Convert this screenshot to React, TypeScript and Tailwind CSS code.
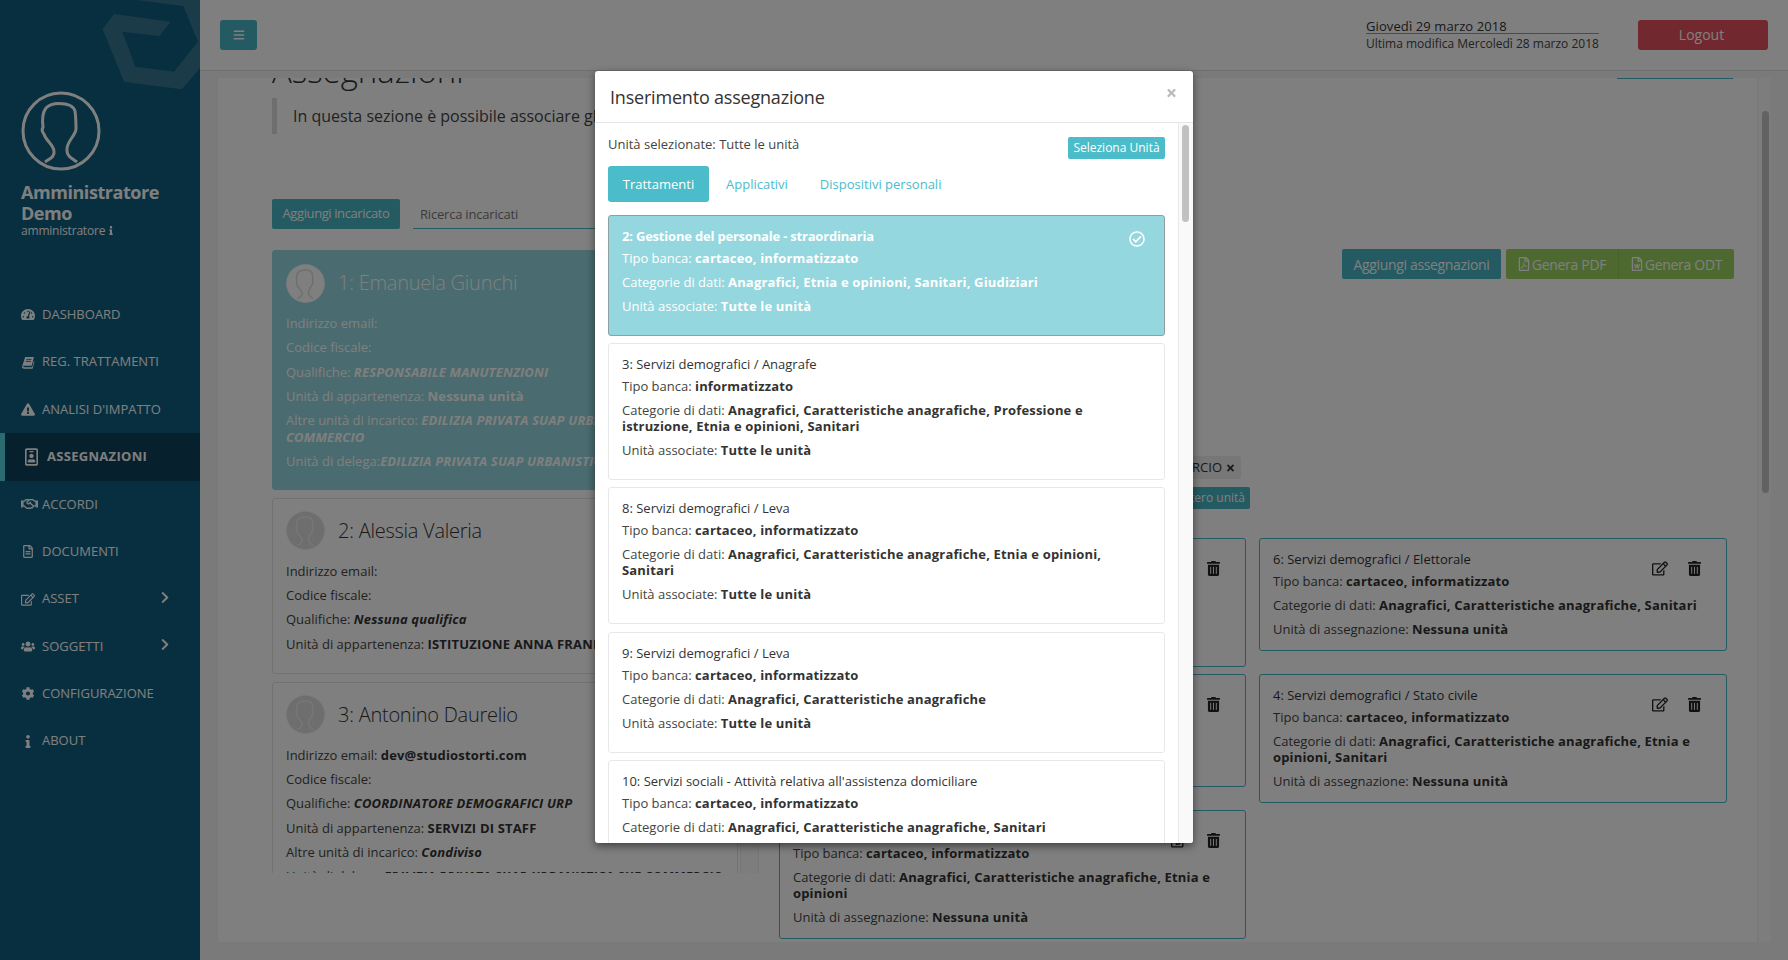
import React from "react";
import {
  FaBars, FaChevronRight, FaCog, FaExclamationTriangle, FaInfo, FaRegCheckCircle, FaRegEdit,
  FaRegFileAlt, FaRegFilePdf, FaRegFileWord, FaRegHandshake, FaRegIdBadge, FaTachometerAlt, FaTimes,
  FaTrashAlt, FaUsers,
} from "react-icons/fa";

const font = { fontFamily: '"Open Sans", "Noto Sans", sans-serif' };

function Person({ stroke, width = 3 }: { stroke: string; width?: number }) {
  return (
    <path
      fill="none"
      stroke={stroke}
      strokeWidth={width}
      d="M24 71 C30 67 34 65 33 60 C32 53 25 50 23 43 C21 41 21 38 22 36 C21 28 21 22 25 17 C29 13 34 12.5 38 12.5 C46 12.5 52 14 54 20 C55 27 55 33 55 38 C55 41 53 43 52 45 C49 50 45 54 46 60 C46 65 50 67 56 71"
    />
  );
}

function Logo() {
  return (
    <svg viewBox="0 0 360 300" className="absolute left-[90px] top-0 h-[100px] w-[120px]">
      <polygon fill="#ffffff" fillOpacity="0.16" points="38,87 72,42 242,65 208,108 97,95 136,200 252,215 324,125 280,18 140,0 360,0 360,170 275,268 102,245" />
    </svg>
  );
}

function SlantBook({ className }: { className?: string }) {
  return (
    <svg viewBox="0 0 14 14" className={className}>
      <path fill="currentColor" d="M4 1 H13.4 L11 10.6 H2.6 C2 10.6 1.8 11.2 2 11.6 C2.2 12 2.6 12.2 3 12.2 H11.6 L13.4 5 L14 5.6 L12.2 13.2 C12.1 13.6 11.8 13.8 11.4 13.8 H2.6 C1.4 13.8 0.4 12.8 0.6 11.4 Z" />
      <path fill="none" stroke="#0a3244" strokeWidth="0.8" d="M5.2 3.6 H10.8 M4.6 5.8 H10.2" />
    </svg>
  );
}

const nav: [string, React.ComponentType<{ className?: string }>, boolean?][] = [
  ["DASHBOARD", FaTachometerAlt],
  ["REG. TRATTAMENTI", SlantBook],
  ["ANALISI D'IMPATTO", FaExclamationTriangle],
  ["ASSEGNAZIONI", FaRegIdBadge],
  ["ACCORDI", FaRegHandshake],
  ["DOCUMENTI", FaRegFileAlt],
  ["ASSET", FaRegEdit, true],
  ["SOGGETTI", FaUsers, true],
  ["CONFIGURAZIONE", FaCog],
  ["ABOUT", FaInfo],
];

function Sidebar() {
  return (
    <aside className="relative h-full w-[200px] shrink-0 overflow-hidden bg-[#115e7e] text-white">
      <Logo />
      <svg viewBox="0 0 80 80" className="ml-[21px] mt-[91px] block h-[80px] w-[80px]">
        <circle cx="40" cy="40" r="38" fill="none" stroke="#ffffff" strokeWidth="3" />
        <Person stroke="#ffffff" />
      </svg>
      <div className="ml-[21px] mt-[11px] w-[150px] text-[18px] font-bold leading-[21px] tracking-[-0.45px]">Amministratore Demo</div>
      <div className="ml-[21px] flex h-[13px] items-center text-[12px] leading-[14px] tracking-[-0.2px]">
        amministratore <FaInfo className="ml-[3px] h-[9px] w-[6px]" />
      </div>
      <nav className="mt-[54px]">
        {nav.map(([label, Icon, arrow]) => {
          const active = label === "ASSEGNAZIONI";
          return (
            <div
              key={label}
              className={
                active
                  ? "flex h-[47.4px] items-center border-l-[5px] border-[#56d4e0] bg-[#0d405a] pl-[20px] text-[13px] font-bold tracking-[0.3px]"
                  : "flex h-[47.4px] items-center pl-[21px] text-[13px]"
              }
            >
              <span className={active ? "flex w-[22px] items-center" : "flex w-[21px] items-center"}>
                <Icon
                  className={
                    active
                      ? "h-[18px] w-[13px]"
                      : label === "ACCORDI"
                        ? "h-[14px] w-[17px]"
                        : "h-[13px] w-[14px]"
                  }
                />
              </span>
              <span>{label}</span>
              {arrow && <FaChevronRight className="absolute left-[160px] mb-[3px] h-[13px] w-[10px]" />}
            </div>
          );
        })}
      </nav>
    </aside>
  );
}

function Header() {
  return (
    <header className="flex h-[71px] shrink-0 items-center justify-between border-b border-[#dddddd] bg-white pl-[20px] pr-[20px] pb-[1px]">
      <button className="flex h-[30px] w-[37px] items-center justify-center rounded-[3px] bg-[#48b4c2] text-white">
        <FaBars className="h-[12px] w-[12px]" />
      </button>
      <div className="flex items-center">
        <div className="w-[233px] text-[#444444]">
          <div className="h-[17px] border-b border-[#48b4c2] text-[13px] font-medium leading-[18px] tracking-[0.1px] text-[#333333]">Giovedì 29 marzo 2018</div>
          <div className="mt-[1px] whitespace-nowrap text-[12px] leading-[18px]">Ultima modifica Mercoledì 28 marzo 2018</div>
        </div>
        <button className="ml-[39px] h-[30px] w-[130px] rounded-[3px] bg-[#e4505f] pr-[3px] text-[14px] text-white">Logout</button>
      </div>
    </header>
  );
}

type L = { l: string; b?: string; i?: boolean };

function Line({ l, b, i, last }: L & { last?: boolean }) {
  return (
    <p className={last ? "text-[13px] leading-[16px]" : "mb-[8px] text-[13px] leading-[16px]"}>
      {l}
      {b && <b className={i ? "font-bold italic tracking-[0.17px] text-[#333333]" : "font-bold tracking-[0.17px] text-[#333333]"}>{b}</b>}
    </p>
  );
}

function PersonCard({ name, lines, selected }: { name: string; lines: L[]; selected?: boolean }) {
  return (
    <div
      className={
        selected
          ? "rounded-[3px] border border-[#94d7de] bg-[#94d7de] px-[13px] pb-[12px] pt-[12px] text-white [&_b]:text-white [&_p]:leading-[16.33px]"
          : "rounded-[3px] border border-[#e4e4e4] bg-white px-[13px] pb-[13px] pt-[12px] text-[#444444] [&_p]:leading-[16.33px]"
      }
    >
      <div className="mb-[12px] flex h-[40px] items-center">
        <svg viewBox="0 0 80 80" className="mr-[13px] h-[39px] w-[39px] shrink-0">
          <circle cx="40" cy="40" r="39" fill={selected ? "#ffffff" : "#dcdcdc"} stroke={selected ? "#ffffff" : "#eeeeee"} />
          <Person stroke={selected ? "#dddddd" : "#eeeeee"} width={3} />
        </svg>
        <span className={selected ? "text-[20px] font-light tracking-[-0.25px]" : "text-[20px] font-light tracking-[-0.25px] text-[#333333]"}>{name}</span>
      </div>
      {lines.map((x, idx) => (
        <Line key={idx} {...x} />
      ))}
    </div>
  );
}

const people = [
  {
    name: "1: Emanuela Giunchi",
    selected: true,
    lines: [
      { l: "Indirizzo email: " },
      { l: "Codice fiscale: " },
      { l: "Qualifiche: ", b: "RESPONSABILE MANUTENZIONI", i: true },
      { l: "Unità di appartenenza: ", b: "Nessuna unità" },
      { l: "Altre unità di incarico: ", b: "EDILIZIA PRIVATA SUAP URBANISTICA SUE COMMERCIO", i: true },
      { l: "Unità di delega:", b: "EDILIZIA PRIVATA SUAP URBANISTICA SUE COMMERCIO", i: true },
    ],
  },
  {
    name: "2: Alessia Valeria",
    lines: [
      { l: "Indirizzo email: " },
      { l: "Codice fiscale: " },
      { l: "Qualifiche: ", b: "Nessuna qualifica", i: true },
      { l: "Unità di appartenenza: ", b: "ISTITUZIONE ANNA FRANK" },
    ],
  },
  {
    name: "3: Antonino Daurelio",
    lines: [
      { l: "Indirizzo email: ", b: "dev@studiostorti.com" },
      { l: "Codice fiscale: " },
      { l: "Qualifiche: ", b: "COORDINATORE DEMOGRAFICI URP", i: true },
      { l: "Unità di appartenenza: ", b: "SERVIZI DI STAFF" },
      { l: "Altre unità di incarico: ", b: "Condiviso", i: true },
      { l: "Unità di delega: ", b: "EDILIZIA PRIVATA SUAP URBANISTICA SUE COMMERCIO", i: true },
    ],
  },
];

const assigned = [
  { t: "5: Servizi demografici / Contratti", banca: "cartaceo, informatizzato", cat: "Anagrafici, Caratteristiche anagrafiche, Finanziari, Sanitari" },
  { t: "6: Servizi demografici / Elettorale", banca: "cartaceo, informatizzato", cat: "Anagrafici, Caratteristiche anagrafiche, Sanitari" },
  { t: "7: Servizi demografici / Leva", banca: "cartaceo, informatizzato", cat: "Anagrafici, Sanitari" },
  { t: "4: Servizi demografici / Stato civile", banca: "cartaceo, informatizzato", cat: "Anagrafici, Caratteristiche anagrafiche, Etnia e opinioni, Sanitari" },
  { t: "1: Servizi demografici / Anagrafe", banca: "cartaceo, informatizzato", cat: "Anagrafici, Caratteristiche anagrafiche, Etnia e opinioni" },
];

function AssignedCard({ t, banca, cat }: { t: string; banca: string; cat: string }) {
  return (
    <div className="relative rounded-[3px] border border-[#48b4c2] bg-white px-[13px] pb-[13px] pt-[12px] text-[#444444]">
      <div className="absolute right-[25px] top-[22px] flex items-center gap-[20px] text-[#222222]">
        <FaRegEdit className="h-[15px] w-[16px]" />
        <FaTrashAlt className="h-[15px] w-[13px]" />
      </div>
      <p className="mb-[6px] text-[13px] font-medium leading-[16px] text-[#333333]">{t}</p>
      <Line l="Tipo banca: " b={banca} />
      <Line l="Categorie di dati: " b={cat} />
      <Line l="Unità di assegnazione: " b="Nessuna unità" last />
    </div>
  );
}

function Content() {
  return (
    <div className="ml-[18px] mr-[17px] mt-[7px] flex h-[864px] overflow-hidden bg-white">
      <div className="min-w-0 flex-1 overflow-hidden pl-[54px] pr-[24px]">
        <div className="-mt-[30px] flex h-[46px] justify-between">
          <h1 className="text-[33px] font-light leading-[46px] text-[#333333]">Assegnazioni</h1>
          <div className="mt-[30px] h-[1px] w-[116px] bg-[#48b4c2]" />
        </div>
        <blockquote className="mt-[4px] flex h-[36px] items-center whitespace-nowrap border-l-[5px] border-[#dddddd] pl-[16px] text-[16px] text-[#444444]">
          In questa sezione è possibile associare gli incaricati ai trattamenti
        </blockquote>
        <div className="mt-[65px] flex">
          <div className="w-[487px] shrink-0">
            <div className="flex h-[30px] gap-[13px]">
              <button className="w-[128px] rounded-[2px] bg-[#48b4c2] text-[13px] tracking-[-0.4px] text-white">Aggiungi incaricato</button>
              <input
                placeholder="Ricerca incaricati"
                className="min-w-0 flex-1 border-b border-[#48b4c2] bg-white px-[7px] pt-[2px] text-[13px] tracking-[-0.2px] outline-none placeholder:text-[#777777]"
              />
            </div>
            <div className="mt-[21px] flex h-[623px] overflow-hidden">
              <div className="flex w-[466px] shrink-0 flex-col gap-[7.5px]">
                {people.map((p) => (
                  <PersonCard key={p.name} {...p} />
                ))}
              </div>
              <div className="ml-[2px] w-[19px] border-x border-[#eeeeee] bg-[#fbfbfb]" />
            </div>
          </div>
          <div className="ml-[20px] min-w-0 flex-1">
            <div className="mt-[50px] flex justify-end">
              <button className="h-[30px] w-[159px] rounded-[2px] bg-[#48b4c2] text-[14px] tracking-[-0.35px] text-white">Aggiungi assegnazioni</button>
              <div className="-mr-[1px] ml-[5px] flex h-[30px] items-center rounded-[2px] bg-[#9ad35f] text-[14px] tracking-[-0.3px] text-white">
                <span className="flex h-full w-[113px] items-center justify-center gap-[2px] border-r border-[#8cc254]">
                  <FaRegFilePdf className="h-[14px] w-[12px]" /> Genera PDF
                </span>
                <span className="flex h-full w-[115px] items-center justify-center gap-[2px]">
                  <FaRegFileWord className="h-[14px] w-[12px]" /> Genera ODT
                </span>
              </div>
            </div>
            <div className="mt-[177px] flex w-[462px] justify-end">
              <span className="flex h-[23px] items-center gap-[4px] whitespace-nowrap rounded-[3px] bg-[#eeeeee] pl-[6px] pr-[6px] text-[13px] text-[#333333]">
                EDILIZIA PRIVATA SUAP URBANISTICA SUE COMMERCIO <FaTimes className="h-[10px] w-[9px]" />
              </span>
            </div>
            <div className="mt-[8px] flex w-[471px] justify-end">
              <button className="h-[22px] w-[150px] rounded-[2px] bg-[#48b4c2] pr-[5px] text-right text-[12px] text-white">Seleziona intero unità</button>
            </div>
            <div className="mt-[29px] grid w-[948px] grid-cols-[467px_468px] items-start gap-x-[13px] gap-y-[7px]">
              {assigned.map((a) => (
                <AssignedCard key={a.t} {...a} />
              ))}
            </div>
          </div>
        </div>
      </div>
      <div className="w-[14px] shrink-0 border-l border-[#f0f0f0] bg-[#fafafa] pl-[4px] pt-[33px]">
        <div className="h-[382px] w-[7px] rounded-[4px] bg-[#c4c4c4]" />
      </div>
    </div>
  );
}

const choices = [
  { t: "2: Gestione del personale - straordinaria", banca: "cartaceo, informatizzato", cat: "Anagrafici, Etnia e opinioni, Sanitari, Giudiziari", selected: true },
  { t: "3: Servizi demografici / Anagrafe", banca: "informatizzato", cat: "Anagrafici, Caratteristiche anagrafiche, Professione e istruzione, Etnia e opinioni, Sanitari" },
  { t: "8: Servizi demografici / Leva", banca: "cartaceo, informatizzato", cat: "Anagrafici, Caratteristiche anagrafiche, Etnia e opinioni, Sanitari" },
  { t: "9: Servizi demografici / Leva", banca: "cartaceo, informatizzato", cat: "Anagrafici, Caratteristiche anagrafiche" },
  { t: "10: Servizi sociali - Attività relativa all'assistenza domiciliare", banca: "cartaceo, informatizzato", cat: "Anagrafici, Caratteristiche anagrafiche, Sanitari" },
];

function ChoiceCard({ t, banca, cat, selected }: { t: string; banca: string; cat: string; selected?: boolean }) {
  return (
    <div
      className={
        selected
          ? "relative rounded-[3px] border border-[#8fa0a3] bg-[#94d7de] pb-[13px] pl-[13px] pr-[21px] pt-[12px] text-white [&_b]:text-white"
          : "relative rounded-[3px] border border-[#e8e8e8] bg-white pb-[13px] pl-[13px] pr-[21px] pt-[12px] text-[#444444]"
      }
    >
      {selected && <FaRegCheckCircle className="absolute right-[19px] top-[15px] h-[16px] w-[16px]" />}
      <p className={selected ? "mb-[6px] text-[13px] font-bold leading-[16px] tracking-[-0.2px]" : "mb-[6px] text-[13px] font-medium leading-[16px] text-[#333333]"}>{t}</p>
      <Line l="Tipo banca: " b={banca} />
      <Line l="Categorie di dati: " b={cat} />
      <Line l="Unità associate: " b="Tutte le unità" />
    </div>
  );
}

function Modal() {
  return (
    <div className="absolute left-[595px] top-[71px] flex h-[772px] w-[598px] flex-col overflow-hidden rounded-[3px] bg-white shadow-[0_3px_9px_rgba(0,0,0,0.5)]">
      <div className="flex h-[52px] shrink-0 items-center justify-between border-b border-[#e5e5e5] pl-[15px] pr-[16px]">
        <h4 className="text-[18px] font-medium leading-[20px] tracking-[-0.2px] text-[#333333]">Inserimento assegnazione</h4>
        <FaTimes className="mb-[8px] h-[12px] w-[11px] text-[#bbbbbb]" />
      </div>
      <div className="flex min-h-0 flex-1">
        <div className="min-w-0 flex-1 overflow-hidden pl-[13px] pr-[13px]">
          <div className="mt-[14px] flex items-start justify-between">
            <span className="-mt-[1px] text-[13px] leading-[16px] text-[#444444]">Unità selezionate: Tutte le unità</span>
            <button className="h-[22px] w-[97px] rounded-[2px] bg-[#4bbcc9] text-[12px] text-white">Seleziona Unità</button>
          </div>
          <div className="mt-[7px] flex h-[36px] items-center text-[13px] text-[#4bbcc9]">
            <span className="flex h-full w-[101px] items-center justify-center rounded-[3px] bg-[#4bbcc9] pt-[2px] font-medium text-white">Trattamenti</span>
            <span className="ml-[17px] pt-[2px]">Applicativi</span>
            <span className="ml-[32px] pt-[2px]">Dispositivi personali</span>
          </div>
          <div className="mt-[13px] flex flex-col gap-[7.2px]">
            {choices.map((c) => (
              <ChoiceCard key={c.t} {...c} />
            ))}
          </div>
        </div>
        <div className="w-[15px] shrink-0 border-l border-[#e8e8e8] bg-[#f9f9f9] pl-[3px] pt-[2px]">
          <div className="h-[97px] w-[7px] rounded-[4px] bg-[#c1c1c1]" />
        </div>
      </div>
    </div>
  );
}

export default function App() {
  return (
    <div className="relative flex h-[960px] w-[1788px] overflow-hidden bg-[#f4f4f4]" style={font}>
      <Sidebar />
      <main className="flex min-w-0 flex-1 flex-col">
        <Header />
        <Content />
      </main>
      <div className="absolute inset-0 bg-black/50" />
      <Modal />
    </div>
  );
}
